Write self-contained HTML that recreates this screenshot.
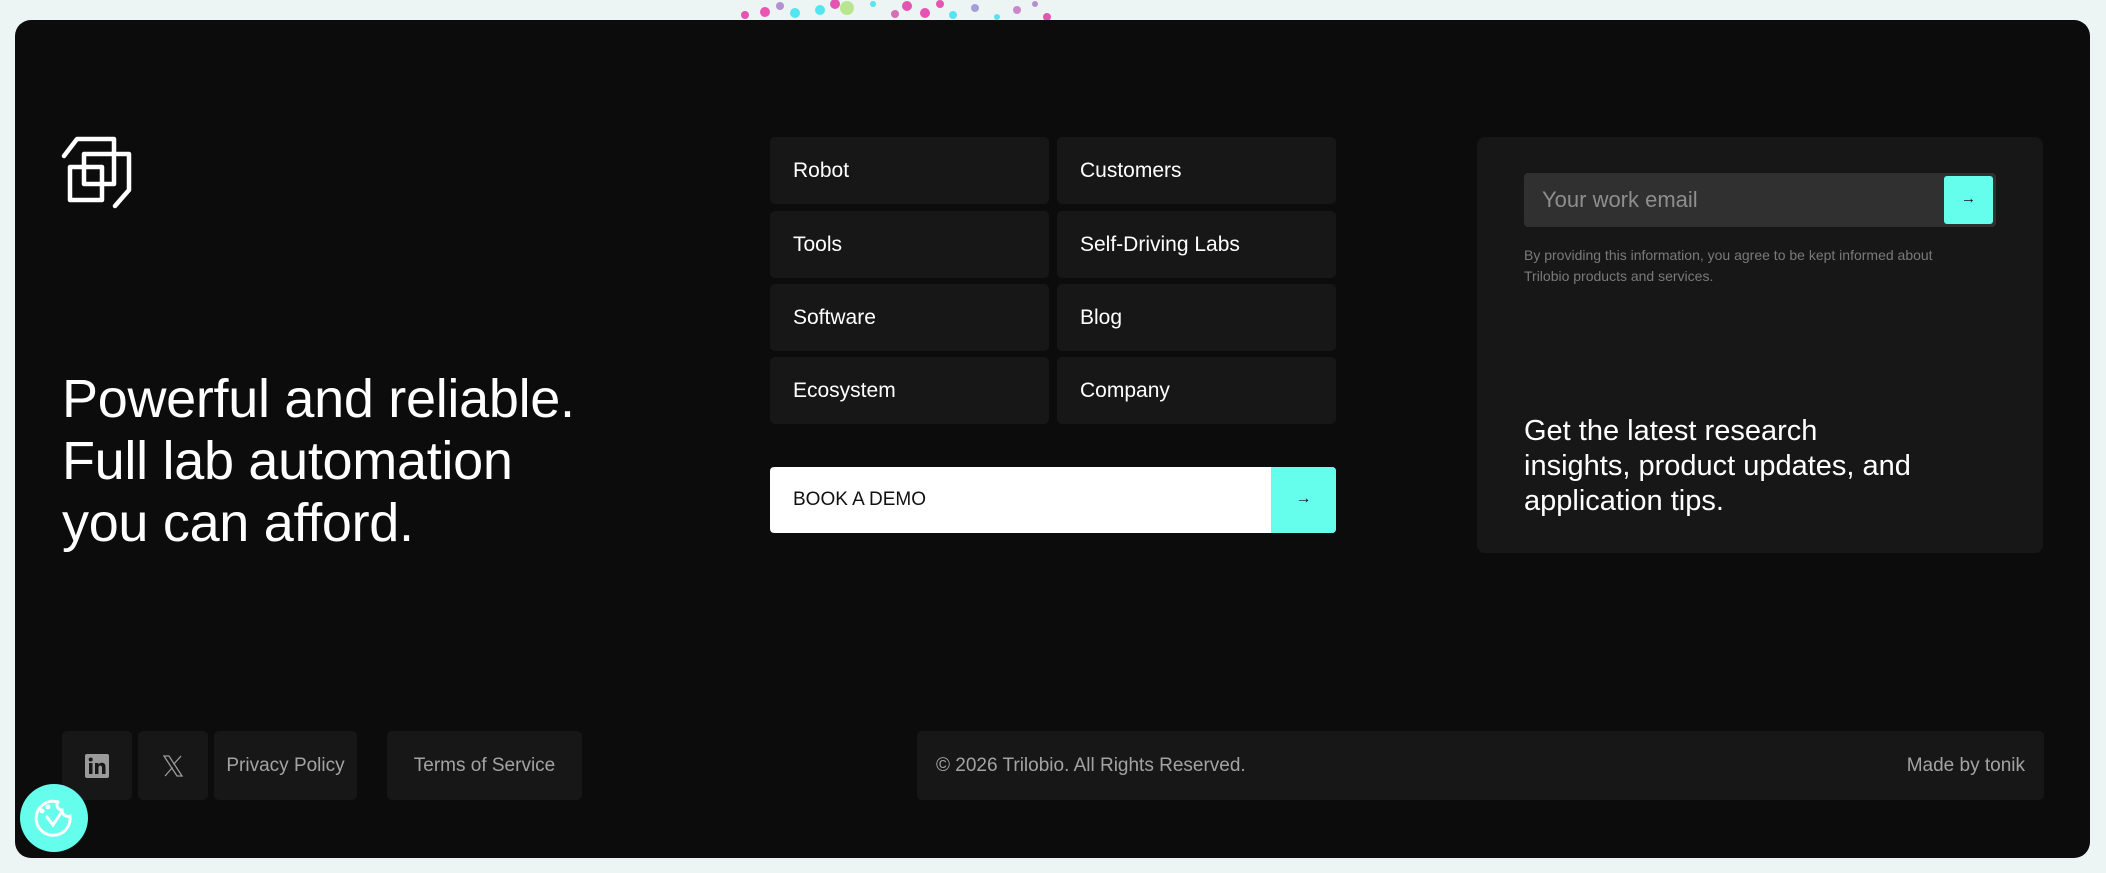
<!DOCTYPE html>
<html><head><meta charset="utf-8"><style>
*{margin:0;padding:0;box-sizing:border-box}
body{width:2106px;height:873px;background:#edf5f4;font-family:"Liberation Sans",sans-serif;position:relative;overflow:hidden}
.card{position:absolute;left:15px;top:20px;width:2075px;height:838px;background:#0c0c0c;border-radius:16px}
.a{position:absolute}
.cell{position:absolute;background:#171717;border-radius:5px;color:#fff;font-size:21px;display:flex;align-items:center;padding-left:23px}
.h1{left:62px;top:368px;color:#fff;font-size:54px;line-height:62px;letter-spacing:-0.3px}
.ft{position:absolute;background:#171717;border-radius:5px;color:#a3a3a3;font-size:20px;display:flex;align-items:center;justify-content:center;top:731px;height:69px}
</style></head><body>
<svg class="a" style="left:735px;top:0" width="330" height="20">
<g opacity="0.75">
<circle cx="10" cy="15" r="4" fill="#e0209a"/><circle cx="30" cy="12" r="5" fill="#e8229c"/><circle cx="45" cy="6" r="4" fill="#a070c0"/><circle cx="60" cy="13" r="5" fill="#20e0f0"/><circle cx="85" cy="10" r="5" fill="#20e0f0"/><circle cx="100" cy="4" r="5" fill="#e0209a"/><circle cx="112" cy="8" r="7" fill="#a8e070"/><circle cx="138" cy="4" r="3" fill="#20e0f0"/><circle cx="160" cy="14" r="4" fill="#d040a0"/><circle cx="172" cy="6" r="5" fill="#e0209a"/><circle cx="190" cy="13" r="5" fill="#e0209a"/><circle cx="205" cy="4" r="4" fill="#e0209a"/><circle cx="218" cy="15" r="4" fill="#20e0f0"/><circle cx="240" cy="8" r="4" fill="#9080d0"/><circle cx="262" cy="17" r="3" fill="#20e0f0"/><circle cx="282" cy="10" r="4" fill="#c060c0"/><circle cx="312" cy="17" r="4" fill="#e0209a"/><circle cx="300" cy="4" r="3" fill="#a070c0"/>
</g></svg>
<div class="card"></div>
<svg class="a" style="left:0;top:0" width="200" height="240" fill="none" stroke="#fff" stroke-width="4.5" stroke-linecap="round" stroke-linejoin="round">
<path d="M64 156 L77 139 H114 V184 H84 V154 H129 V190 L115 206"/>
<path d="M70 167 H102 V200 H70 Z"/>
</svg>
<div class="a h1">Powerful and reliable.<br>Full lab automation<br>you can afford.</div>
<div class="cell" style="left:770px;top:137px;width:279px;height:67px">Robot</div>
<div class="cell" style="left:1057px;top:137px;width:279px;height:67px">Customers</div>
<div class="cell" style="left:770px;top:211px;width:279px;height:67px">Tools</div>
<div class="cell" style="left:1057px;top:211px;width:279px;height:67px">Self-Driving Labs</div>
<div class="cell" style="left:770px;top:284px;width:279px;height:67px">Software</div>
<div class="cell" style="left:1057px;top:284px;width:279px;height:67px">Blog</div>
<div class="cell" style="left:770px;top:357px;width:279px;height:67px">Ecosystem</div>
<div class="cell" style="left:1057px;top:357px;width:279px;height:67px">Company</div>
<div class="a" style="left:770px;top:467px;width:566px;height:66px;background:#fff;border-radius:4px;overflow:hidden">
<div class="a" style="left:23px;top:0;line-height:66px;font-size:19px;color:#111">BOOK A DEMO</div>
<div class="a" style="right:0;top:0;width:65px;height:66px;background:#65fdeb;text-align:center;line-height:64px;font-size:16px;color:#111">→</div>
</div>
<div class="a" style="left:1477px;top:137px;width:566px;height:416px;background:#171717;border-radius:8px"></div>
<div class="a" style="left:1524px;top:173px;width:472px;height:54px;background:#303030;border-radius:4px">
<div class="a" style="left:18px;top:0;line-height:54px;font-size:22px;color:#8e8e8e">Your work email</div>
<div class="a" style="right:3px;top:3px;width:49px;height:48px;background:#65fdeb;border-radius:3px;text-align:center;line-height:46px;font-size:15px;color:#111">→</div>
</div>
<div class="a" style="left:1524px;top:245px;font-size:14px;line-height:21px;color:#7a7a7a">By providing this information, you agree to be kept informed about<br>Trilobio products and services.</div>
<div class="a" style="left:1524px;top:414px;font-size:29px;line-height:35px;color:#fff">Get the latest research<br>insights, product updates, and<br>application tips.</div>
<div class="ft" style="left:62px;width:70px">
<svg width="24" height="24" viewBox="0 0 24 24"><rect width="24" height="24" rx="2" fill="#9a9a9a"/><rect x="4" y="9" width="3.5" height="11" fill="#171717"/><circle cx="5.7" cy="5.5" r="2" fill="#171717"/><path d="M10 9h3.3v1.6c.6-1 1.8-1.9 3.6-1.9 3 0 3.6 2 3.6 4.5V20H17v-5.8c0-1.4-.2-2.6-1.7-2.6s-1.8 1.2-1.8 2.5V20H10z" fill="#171717"/></svg>
</div>
<div class="ft" style="left:138px;width:70px">
<svg width="24" height="24" viewBox="0 0 24 24" fill="none" stroke="#9a9a9a" stroke-width="1.3"><path d="M3 2h5l13 20h-5z"/><path d="M20 2l-7.5 8.5M4 22l7.5-8.5"/></svg>
</div>
<div class="ft" style="left:214px;width:143px;font-size:19px">Privacy Policy</div>
<div class="ft" style="left:387px;width:195px;font-size:19px">Terms of Service</div>
<div class="ft" style="left:917px;width:1127px;justify-content:space-between;padding:0 19px;font-size:19px">
<span>© 2026 Trilobio. All Rights Reserved.</span><span>Made by tonik</span></div>
<div class="a" style="left:20px;top:784px;width:68px;height:68px;border-radius:50%;background:#65fdeb"></div>
<svg class="a" style="left:32px;top:796px" width="44" height="44" viewBox="0 0 44 44" fill="none" stroke="#fff" stroke-width="3" stroke-linecap="round">
<path d="M26 6 A17 17 0 1 0 38 20 A6 6 0 0 1 30 14 A5 5 0 0 1 26 6"/>
<path d="M15 21 l6 8 l8 -12"/>
<circle cx="16" cy="11" r="1" fill="#fff"/><circle cx="10" cy="15" r="1" fill="#fff"/>
</svg>
</body></html>
